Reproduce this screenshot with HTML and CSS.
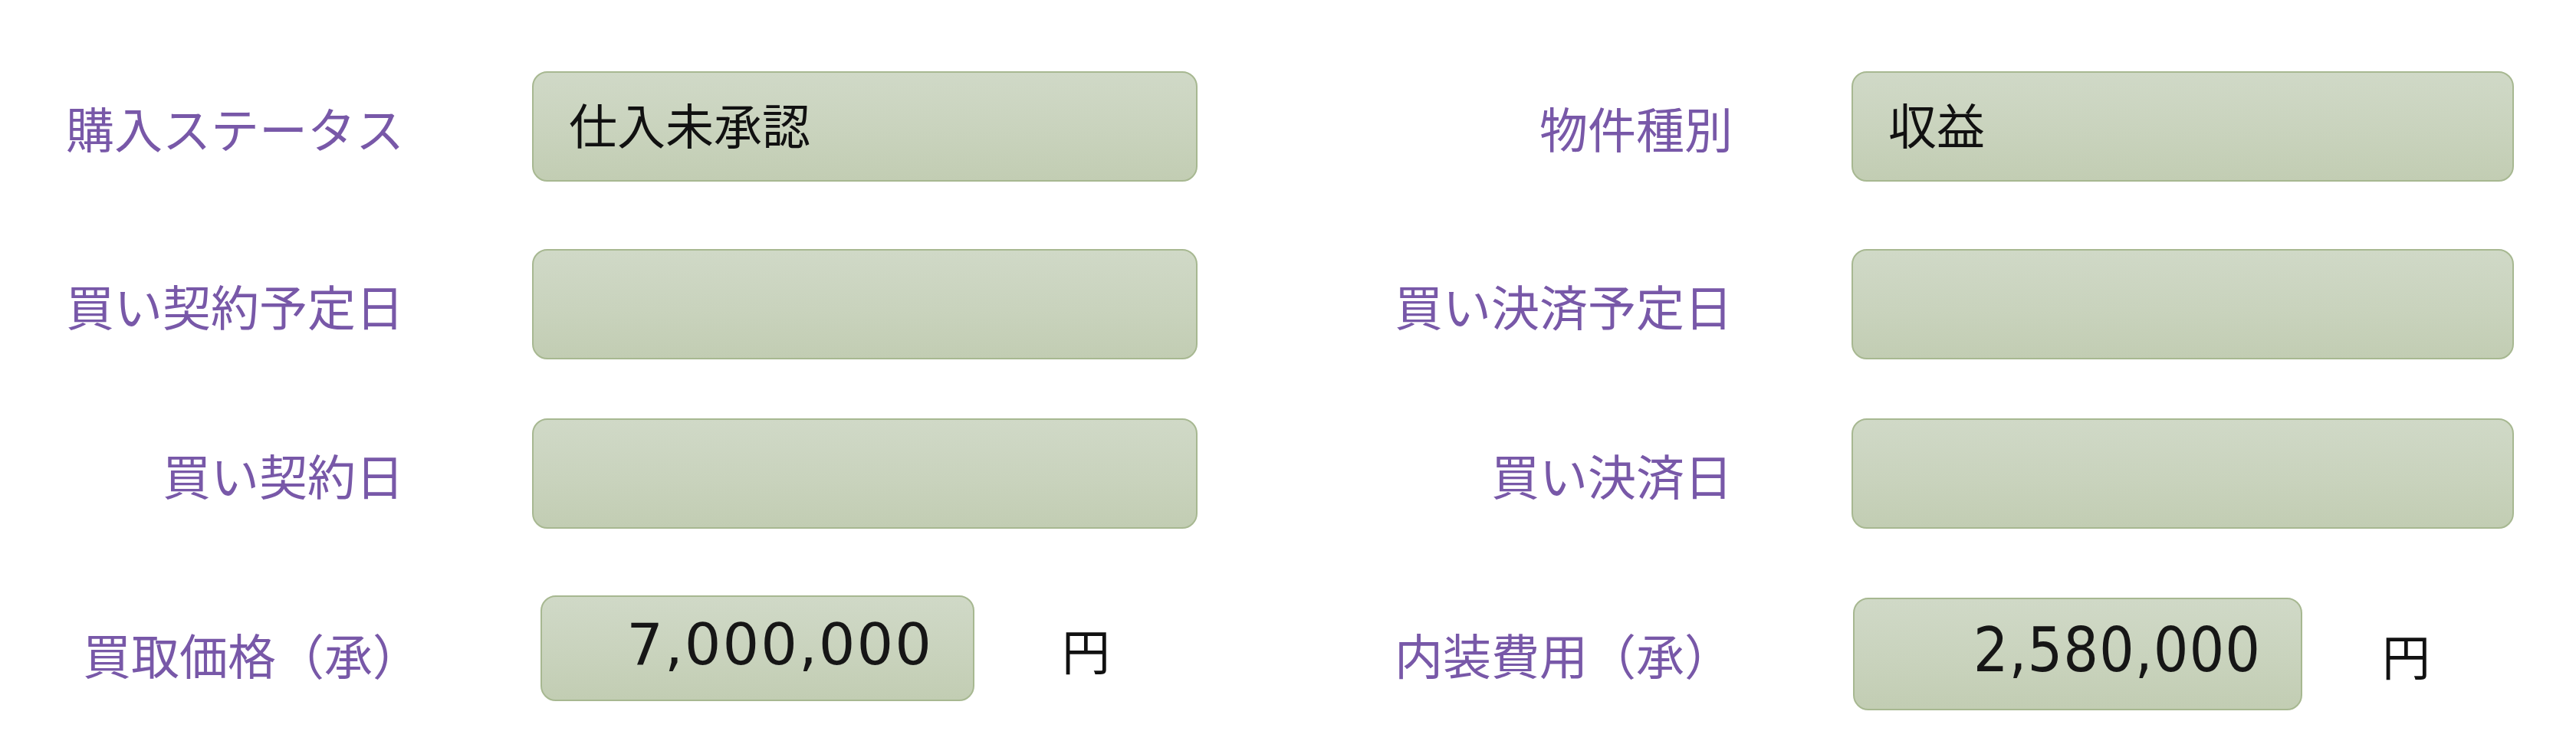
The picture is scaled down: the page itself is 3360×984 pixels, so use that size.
FILE: index.html
```html
<!DOCTYPE html>
<html lang="ja">
<head>
<meta charset="utf-8">
<title>購入情報</title>
<link rel="stylesheet" href="styles.css">
</head>
<body>
<div class="sheet">
  <div class="row row-1">
    <div class="label">購入ステータス</div>
    <div class="field"><span class="value">仕入未承認</span></div>
    <div class="label">物件種別</div>
    <div class="field field-right"><span class="value">収益</span></div>
  </div>
  <div class="row row-2">
    <div class="label">買い契約予定日</div>
    <div class="field"></div>
    <div class="label">買い決済予定日</div>
    <div class="field field-right"></div>
  </div>
  <div class="row row-3">
    <div class="label">買い契約日</div>
    <div class="field"></div>
    <div class="label">買い決済日</div>
    <div class="field field-right"></div>
  </div>
  <div class="row row-4">
    <div class="label label-shift">買取価格（承）</div>
    <div class="money">
      <div class="field amount amount-left"><span class="num num-a">7,000,000</span></div>
      <span class="unit">円</span>
    </div>
    <div class="label">内装費用（承）</div>
    <div class="money money-right">
      <div class="field amount amount-right"><span class="num num-b">2,580,000</span></div>
      <span class="unit unit-right">円</span>
    </div>
  </div>
</div>
</body>
</html>
```

FILE: styles.css
```css
html, body {
  margin: 0;
  padding: 0;
  background: #ffffff;
}

body {
  width: 3360px;
  height: 984px;
  overflow: hidden;
  font-family: "Noto Sans CJK JP", "Noto Sans", sans-serif;
}

.sheet {
  padding-top: 93px;
}

.row {
  display: grid;
  grid-template-columns: 527px 1035px 698px 1100px;
  align-items: center;
  height: 144px;
}

.row-2 { margin-top: 88px; }
.row-3 { margin-top: 77px; }
.row-4 {
  margin-top: 87px;
  height: 150px;
  align-items: start;
}

.label {
  text-align: right;
  color: #7858a8;
  font-size: 63px;
  line-height: 1;
  white-space: nowrap;
  align-self: center;
}

.label-shift {
  margin-right: -22px;
}

.field {
  box-sizing: border-box;
  margin-left: 167px;
  width: 868px;
  height: 144px;
  border: 2px solid #a7b891;
  border-radius: 20px;
  background: linear-gradient(to bottom, #d0d9c7 0%, #c9d3bd 55%, #c2cdb3 100%);
  display: flex;
  align-items: center;
  padding: 0 0 10px 46px;
}

.field-right {
  margin-left: 155px;
  width: 864px;
}

.value {
  color: #111111;
  font-size: 63px;
  line-height: 1;
  white-space: nowrap;
}

.money {
  display: flex;
  align-items: center;
  margin-left: 178px;
}

.money-right {
  margin-left: 157px;
}

.amount {
  margin-left: 0;
  justify-content: flex-end;
  padding: 0 52px 10px 0;
}

.amount-left {
  width: 566px;
  height: 138px;
}

.amount-right {
  width: 586px;
  height: 147px;
  margin-top: 3px;
}

.num {
  color: #161616;
  line-height: 1;
  white-space: nowrap;
}

.num-a {
  font-family: "DejaVu Sans", sans-serif;
  font-size: 75px;
  letter-spacing: 2px;
}

.num-b {
  font-family: "DejaVu Sans Condensed", "Liberation Sans Narrow", "Liberation Sans", sans-serif;
  font-size: 80px;
  letter-spacing: 1px;
}

.unit {
  color: #111111;
  font-size: 63px;
  line-height: 1;
  margin-left: 114px;
}

.unit-right {
  margin-left: 104px;
  margin-top: 3px;
}
```
